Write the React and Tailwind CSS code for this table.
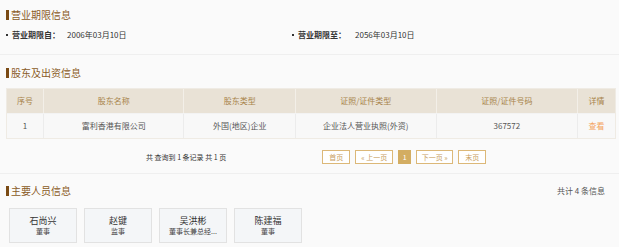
import React from 'react';

const shareholders = [
  {
    no: '1',
    name: '富利香港有限公司',
    type: '外国(地区)企业',
    certType: '企业法人营业执照(外资)',
    certNo: '367572',
  },
];

const people = [
  { name: '石尚兴', role: '董事' },
  { name: '赵键', role: '监事' },
  { name: '吴洪彬', role: '董事长兼总经...' },
  { name: '陈建福', role: '董事' },
];

// column widths of the shareholder table
const cols = [
  { key: 'no', label: '序号', w: 'w-[37px]' },
  { key: 'name', label: '股东名称', w: 'w-[141px]' },
  { key: 'type', label: '股东类型', w: 'w-[112px]' },
  { key: 'certType', label: '证照/证件类型', w: 'w-[141px]' },
  { key: 'certNo', label: '证照/证件号码', w: 'w-[142px]' },
  { key: 'detail', label: '详情', w: 'w-[37px]' },
];

function SectionTitle({ children }) {
  return (
    <div className="flex items-center h-[14px] gap-[2px]">
      <span className="w-[3px] h-[10px] bg-[#7a4a14]" />
      <span className="text-[10px] leading-none text-[#8a5a26]">{children}</span>
    </div>
  );
}

function PageBtn({ children, active, w }) {
  if (active) {
    return (
      <span className="h-[14px] w-[13px] flex items-center justify-center bg-[#d3ad62] text-white text-[7px] leading-none">
        {children}
      </span>
    );
  }
  return (
    <span className={`h-[14px] ${w} flex items-center justify-center border border-[#dcb878] bg-white text-[#c8a062] text-[7px] leading-none`}>
      {children}
    </span>
  );
}

export default function App() {
  return (
    <div
      className="w-[619px] h-[247px] overflow-hidden bg-[#fafafa] text-[#333]"
      style={{ fontFamily: '"Noto Sans CJK SC", "Noto Sans", sans-serif' }}
    >
      {/* ── 营业期限 ── */}
      <div className="px-[6px] pt-[8px] border-b border-[#efefef] h-[55px]">
        <SectionTitle>营业期限信息</SectionTitle>
        <div className="flex mt-[9px] text-[8px] leading-none">
          <div className="flex items-center w-[286px]">
            <span className="w-[2px] h-[2px] bg-[#333] mr-[4px]" />
            <span className="font-bold w-[55px]">营业期限自：</span>
            <span>2006年03月10日</span>
          </div>
          <div className="flex items-center">
            <span className="w-[2px] h-[2px] bg-[#333] mr-[4px]" />
            <span className="font-bold w-[57px]">营业期限至：</span>
            <span>2056年03月10日</span>
          </div>
        </div>
      </div>

      {/* ── 股东及出资 ── */}
      <div className="px-[6px] pt-[11px] border-b border-[#efefef] h-[119px]">
        <SectionTitle>股东及出资信息</SectionTitle>
        <div className="mt-[8px] w-[610px] border border-[#efebe4]">
          <div className="flex h-[24px] bg-[#e9e2d6]">
            {cols.map((c, i) => (
              <div
                key={c.key}
                className={`${c.w} flex items-center justify-center text-[8px] text-[#a8824a] ${i < cols.length - 1 ? 'border-r border-[#f3efe8]' : ''}`}
              >
                {c.label}
              </div>
            ))}
          </div>
          {shareholders.map(row => (
            <div key={row.no} className="flex h-[25px] bg-[#f8f8f8] border-t border-[#f3f3f3]">
              {cols.map((c, i) => (
                <div
                  key={c.key}
                  className={`${c.w} flex items-center justify-center text-[8px] text-[#555] ${i < cols.length - 1 ? 'border-r border-[#ececec]' : ''}`}
                >
                  {c.key === 'detail' ? <span className="text-[#f4a560]">查看</span> : row[c.key]}
                </div>
              ))}
            </div>
          ))}
        </div>

        {/* pager */}
        <div className="flex items-center mt-[11px] h-[14px]">
          <span className="ml-[140px] text-[7px] text-[#333] leading-none">共 查询到 1 条记录 共 1 页</span>
          <div className="ml-[96px] flex items-center gap-[5px]">
            <PageBtn w="w-[28px]">首页</PageBtn>
            <PageBtn w="w-[38px]">« 上一页</PageBtn>
            <PageBtn active>1</PageBtn>
            <PageBtn w="w-[37px]">下一页 »</PageBtn>
            <PageBtn w="w-[28px]">末页</PageBtn>
          </div>
        </div>
      </div>

      {/* ── 主要人员 ── */}
      <div className="px-[6px] pt-[10px]">
        <div className="flex items-center justify-between pr-[8px]">
          <SectionTitle>主要人员信息</SectionTitle>
          <span className="text-[8px] text-[#555] leading-none">共计 4 条信息</span>
        </div>
        <div className="flex gap-[7px] mt-[10px] pl-[3px]">
          {people.map(p => (
            <div
              key={p.name}
              className="w-[68px] h-[35px] border border-[#e2e2e2] bg-[#f4f6f8] flex flex-col items-center justify-center gap-[3px]"
            >
              <span className="text-[9px] leading-none text-[#333]">{p.name}</span>
              <span className="text-[7px] leading-none text-[#444] whitespace-nowrap">{p.role}</span>
            </div>
          ))}
        </div>
      </div>
    </div>
  );
}
